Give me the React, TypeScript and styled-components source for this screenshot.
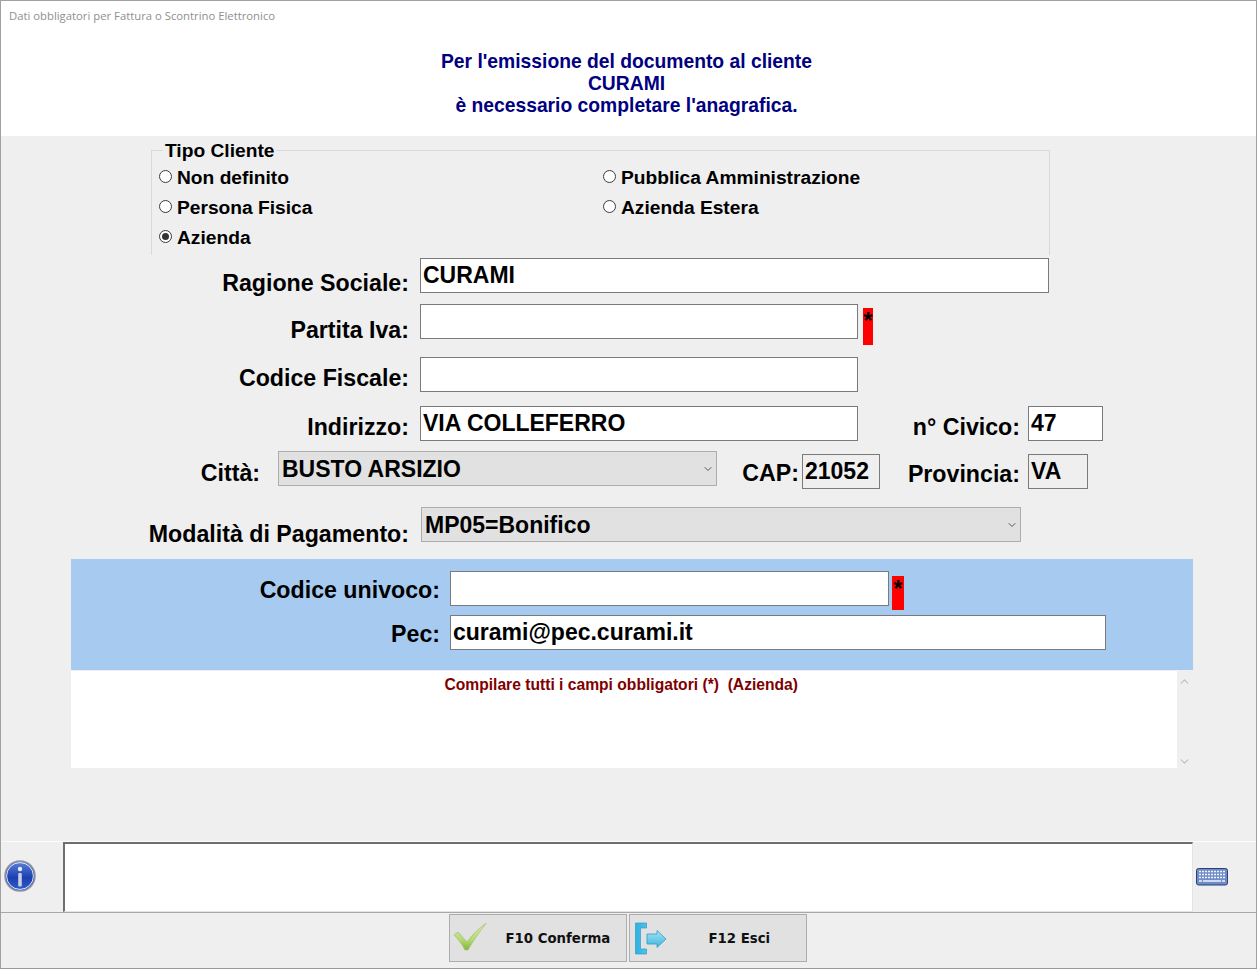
import styled, { createGlobalStyle } from "styled-components";
import { FunctionComponent } from "react";
import { ChevronDown, ChevronUp } from "lucide-react";

const GlobalStyle = createGlobalStyle`
  html, body {
    margin: 0;
    padding: 0;
    background: #efefef;
  }
  * {
    box-sizing: border-box;
  }
`;

const WindowFrame = styled.div`
  display: flex;
  flex-direction: column;
  width: 1257px;
  height: 969px;
  overflow: hidden;
  background: #efefef;
  border: 1px solid #a0a0a0;
  border-bottom-color: #9a9a9a;
  font-family: "Liberation Sans", Arial, sans-serif;
  color: #000;
`;

const Header = styled.header`
  height: 135px;
  flex-shrink: 0;
  background: #fff;
  padding-top: 8px;
`;

const WindowTitle = styled.div`
  height: 14px;
  padding-left: 8px;
  font-family: "Open Sans", sans-serif;
  font-size: 11.3px;
  line-height: 14px;
  color: #8f8f8f;
`;

const Heading = styled.h1`
  margin: 28px 0 0 -4px;
  font-size: 19.3px;
  line-height: 22px;
  font-weight: 700;
  text-align: center;
  color: #000080;
`;

const TypeBox = styled.fieldset`
  width: 899px;
  height: 116px;
  margin: 3px 0 0 150px;
  padding: 1px 0 3px 7px;
  border: 1px solid #d9d9d9;
  border-bottom: none;
`;

const TypeLegend = styled.legend`
  margin-left: 4px;
  padding: 2px 2px 0;
  font-size: 19.2px;
  line-height: 20px;
  font-weight: 700;
`;

const RadioGrid = styled.div`
  display: grid;
  grid-template-columns: 444px 1fr;
  grid-auto-rows: 30px;
`;

const RadioItem = styled.label`
  display: flex;
  align-items: center;
  gap: 5px;
  padding-top: 2px;
  font-size: 19.2px;
  line-height: 24px;
  font-weight: 700;
`;

const RadioDot = styled.span<{ $checked?: boolean }>`
  display: flex;
  align-items: center;
  justify-content: center;
  width: 13px;
  height: 13px;
  margin-top: -4px;
  background: #fff;
  border: 1px solid #3c3c3c;
  border-radius: 50%;
  &::after {
    content: "";
    display: ${(p) => (p.$checked ? "block" : "none")};
    width: 7px;
    height: 7px;
    border-radius: 50%;
    background: #333;
  }
`;

const Row = styled.div<{ $top: number }>`
  display: flex;
  height: 35px;
  flex-shrink: 0;
  margin-top: ${(p) => p.$top}px;
`;

const FieldLabel = styled.label<{ $width: number; $gap: number; $pad: number }>`
  width: ${(p) => p.$width}px;
  margin-right: ${(p) => p.$gap}px;
  padding-top: ${(p) => p.$pad}px;
  flex-shrink: 0;
  font-size: 23.2px;
  line-height: 28px;
  font-weight: 700;
  text-align: right;
  white-space: nowrap;
`;

const TextField = styled.input<{ $width: number; $grey?: boolean }>`
  width: ${(p) => p.$width}px;
  height: 35px;
  flex-shrink: 0;
  margin: ${(p) => (p.$grey ? "3px 0 0" : "0")};
  padding: 0 0 0 2px;
  background: ${(p) => (p.$grey ? "#efefef" : "#fff")};
  border: 1px solid #7a7a7a;
  border-radius: 0;
  outline: none;
  font-family: "Liberation Sans", Arial, sans-serif;
  font-size: 23px;
  font-weight: 700;
  color: #000;
`;

const Dropdown = styled.div<{ $width: number }>`
  display: flex;
  align-items: center;
  justify-content: space-between;
  width: ${(p) => p.$width}px;
  height: 35px;
  flex-shrink: 0;
  padding: 1px 2px 0 3px;
  background: #e1e1e1;
  border: 1px solid #adadad;
  font-size: 23px;
  font-weight: 700;
  svg {
    color: #555;
  }
`;

const RequiredMark = styled.span<{ $width: number; $top: number; $height: number }>`
  width: ${(p) => p.$width}px;
  height: ${(p) => p.$height}px;
  margin: ${(p) => p.$top}px 0 0 ${(p) => (p.$width === 10 ? 5 : 3)}px;
  flex-shrink: 0;
  background: #ff0000;
  font-size: 23px;
  font-weight: 700;
  line-height: 26px;
  text-align: center;
  overflow: hidden;
`;

const BlueBand = styled.section`
  width: 1122px;
  height: 111px;
  flex-shrink: 0;
  margin: 17px 0 0 70px;
  padding-top: 12px;
  background: #a6caf0;
`;

const MessageArea = styled.div`
  display: flex;
  width: 1122px;
  height: 97px;
  flex-shrink: 0;
  margin: 1px 0 0 70px;
`;

const MessageBody = styled.div`
  width: 1106px;
  padding: 4px 6px 0 0;
  background: #fff;
  text-align: center;
`;

const NarrowText = styled.span`
  display: inline-block;
  font-size: 17px;
  line-height: 20px;
  font-weight: 700;
  white-space: pre;
  color: #800000;
  transform: scaleX(0.92);
`;

const ScrollGutter = styled.div`
  display: flex;
  flex-direction: column;
  align-items: center;
  justify-content: space-between;
  width: 16px;
  padding: 4px 2px 0 0;
  color: #bdbdbd;
`;

const StatusRow = styled.div`
  display: flex;
  align-items: center;
  height: 72px;
  flex-shrink: 0;
  margin-top: auto;
  border-top: 1px solid #fbfbfb;
  border-bottom: 1px solid #a8a8a8;
`;

const InfoSlot = styled.div`
  display: flex;
  justify-content: center;
  width: 62px;
  margin-top: -2px;
  padding-right: 24px;
  flex-shrink: 0;
`;

const StatusBox = styled.div`
  width: 1130px;
  height: 70px;
  flex-shrink: 0;
  background: #fff;
  border-top: 2px solid #6e6e6e;
  border-left: 2px solid #6e6e6e;
  border-right: 1px solid #e4e4e4;
  border-bottom: 1px solid #e4e4e4;
`;

const KeyboardSlot = styled.div`
  display: flex;
  justify-content: center;
  flex: 1;
  padding-right: 26px;
`;

const ButtonBar = styled.footer`
  display: flex;
  justify-content: center;
  gap: 2px;
  height: 55px;
  flex-shrink: 0;
  padding: 1px 2px 0 0;
`;

const ActionButton = styled.button<{ $iconLeft: number; $textLeft: number }>`
  display: flex;
  align-items: center;
  width: 178px;
  height: 48px;
  padding: 0 0 0 ${(p) => p.$iconLeft}px;
  background: #e1e1e1;
  border: 1px solid #adadad;
  font-family: "DejaVu Sans", Tahoma, sans-serif;
  font-size: 13.3px;
  font-weight: 700;
  color: #111;
  svg {
    flex-shrink: 0;
  }
  span {
    margin-left: ${(p) => p.$textLeft}px;
  }
`;

const InfoIcon: FunctionComponent = () => (
  <svg width="32" height="32" viewBox="0 0 32 32">
    <defs>
      <linearGradient id="infoFill" x1="0" y1="0" x2="0" y2="1">
        <stop offset="0" stopColor="#5f86dc" />
        <stop offset="0.55" stopColor="#1c3fb0" />
        <stop offset="1" stopColor="#2f5fd0" />
      </linearGradient>
    </defs>
    <circle cx="16" cy="16" r="15" fill="url(#infoFill)" stroke="#8d93a3" strokeWidth="1.5" />
    <circle cx="16" cy="16" r="13.4" fill="none" stroke="#e4e8f2" strokeWidth="1" />
    <circle cx="16" cy="9" r="2.2" fill="#e8eefb" />
    <rect x="14.2" y="13" width="3.6" height="13.5" rx="1" fill="#c9cfdc" />
  </svg>
);

const KeyboardIcon: FunctionComponent = () => (
  <svg width="32" height="18" viewBox="0 0 32 18">
    <rect x="0.5" y="0.5" width="31" height="16.5" rx="2" fill="#6f8cc6" stroke="#2a3f7c" />
    <g stroke="#eef3fc" strokeWidth="1.7" strokeDasharray="2 1">
      <path d="M3 3.5h26" />
      <path d="M3 6.5h26" />
      <path d="M3 9.5h26" />
    </g>
    <path d="M3 13h3M7 13h18M26 13h3" stroke="#eef3fc" strokeWidth="1.7" />
  </svg>
);

const CheckIcon: FunctionComponent = () => (
  <svg width="36" height="30" viewBox="0 0 36 30">
    <defs>
      <linearGradient id="checkFill" x1="0" y1="0" x2="0" y2="1">
        <stop offset="0" stopColor="#d6eca6" />
        <stop offset="0.6" stopColor="#b4dc72" />
        <stop offset="1" stopColor="#84b63c" />
      </linearGradient>
    </defs>
    <path
      d="M2 12 L6 9 L15 19 C20 12 27 5 34 0.5 C28 8 21 18 16 27 L13 27 C10 21 6 16 2 12 Z"
      fill="url(#checkFill)"
      stroke="#9dbf70"
      strokeWidth="0.7"
    />
  </svg>
);

const ExitIcon: FunctionComponent = () => (
  <svg width="32" height="34" viewBox="0 0 32 34">
    <defs>
      <linearGradient id="exitFill" x1="0" y1="0" x2="1" y2="0">
        <stop offset="0" stopColor="#2fb0e0" />
        <stop offset="1" stopColor="#4cc4ea" />
      </linearGradient>
      <linearGradient id="arrowFill" x1="0" y1="0" x2="0" y2="1">
        <stop offset="0" stopColor="#a6e2f3" />
        <stop offset="1" stopColor="#3fb6de" />
      </linearGradient>
    </defs>
    <path
      d="M0.5 2 H11.5 V7 H5.5 V28 H11.5 V33 H0.5 Z"
      fill="url(#exitFill)"
      stroke="#2f9cc6"
      strokeWidth="0.7"
    />
    <path
      d="M12 13 H22 V9.5 L31 18 L22 26.5 V23 H12 Z"
      fill="url(#arrowFill)"
      stroke="#2f9cc6"
      strokeWidth="0.8"
    />
  </svg>
);

const App: FunctionComponent = () => {
  return (
    <WindowFrame>
      <GlobalStyle />
      <Header>
        <WindowTitle>Dati obbligatori per Fattura o Scontrino Elettronico</WindowTitle>
        <Heading>
          Per l'emissione del documento al cliente
          <br />
          CURAMI
          <br />
          è necessario completare l'anagrafica.
        </Heading>
      </Header>

      <TypeBox>
        <TypeLegend>Tipo Cliente</TypeLegend>
        <RadioGrid>
          <RadioItem><RadioDot />Non definito</RadioItem>
          <RadioItem><RadioDot />Pubblica Amministrazione</RadioItem>
          <RadioItem><RadioDot />Persona Fisica</RadioItem>
          <RadioItem><RadioDot />Azienda Estera</RadioItem>
          <RadioItem><RadioDot $checked />Azienda</RadioItem>
        </RadioGrid>
      </TypeBox>

      <Row $top={3}>
        <FieldLabel $width={408} $gap={11} $pad={11}>Ragione Sociale:</FieldLabel>
        <TextField $width={629} readOnly value="CURAMI" />
      </Row>
      <Row $top={11}>
        <FieldLabel $width={408} $gap={11} $pad={12}>Partita Iva:</FieldLabel>
        <TextField $width={438} readOnly value="" />
        <RequiredMark $width={10} $top={4} $height={37}>*</RequiredMark>
      </Row>
      <Row $top={18}>
        <FieldLabel $width={408} $gap={11} $pad={7}>Codice Fiscale:</FieldLabel>
        <TextField $width={438} readOnly value="" />
      </Row>
      <Row $top={14}>
        <FieldLabel $width={408} $gap={11} $pad={7}>Indirizzo:</FieldLabel>
        <TextField $width={438} readOnly value="VIA COLLEFERRO" />
        <FieldLabel $width={162} $gap={8} $pad={7}>n° Civico:</FieldLabel>
        <TextField $width={75} readOnly value="47" />
      </Row>
      <Row $top={10}>
        <FieldLabel $width={259} $gap={18} $pad={8}>Città:</FieldLabel>
        <Dropdown $width={439}>
          BUSTO ARSIZIO
          <ChevronDown size={12} />
        </Dropdown>
        <FieldLabel $width={82} $gap={3} $pad={8}>CAP:</FieldLabel>
        <TextField $width={78} $grey readOnly value="21052" />
        <FieldLabel $width={140} $gap={8} $pad={9}>Provincia:</FieldLabel>
        <TextField $width={60} $grey readOnly value="VA" />
      </Row>
      <Row $top={21}>
        <FieldLabel $width={408} $gap={12} $pad={13}>Modalità di Pagamento:</FieldLabel>
        <Dropdown $width={600}>
          MP05=Bonifico
          <ChevronDown size={12} />
        </Dropdown>
      </Row>

      <BlueBand>
        <Row $top={0}>
          <FieldLabel $width={369} $gap={10} $pad={5}>Codice univoco:</FieldLabel>
          <TextField $width={439} readOnly value="" />
          <RequiredMark $width={12} $top={5} $height={34}>*</RequiredMark>
        </Row>
        <Row $top={9}>
          <FieldLabel $width={369} $gap={10} $pad={5}>Pec:</FieldLabel>
          <TextField $width={656} readOnly value="curami@pec.curami.it" />
        </Row>
      </BlueBand>

      <MessageArea>
        <MessageBody>
          <NarrowText>Compilare tutti i campi obbligatori (*)  (Azienda)</NarrowText>
        </MessageBody>
        <ScrollGutter>
          <ChevronUp size={13} />
          <ChevronDown size={13} />
        </ScrollGutter>
      </MessageArea>

      <StatusRow>
        <InfoSlot>
          <InfoIcon />
        </InfoSlot>
        <StatusBox />
        <KeyboardSlot>
          <KeyboardIcon />
        </KeyboardSlot>
      </StatusRow>

      <ButtonBar>
        <ActionButton $iconLeft={2} $textLeft={18}>
          <CheckIcon />
          <span>F10 Conferma</span>
        </ActionButton>
        <ActionButton $iconLeft={5} $textLeft={42}>
          <ExitIcon />
          <span>F12 Esci</span>
        </ActionButton>
      </ButtonBar>
    </WindowFrame>
  );
};

export default App;
